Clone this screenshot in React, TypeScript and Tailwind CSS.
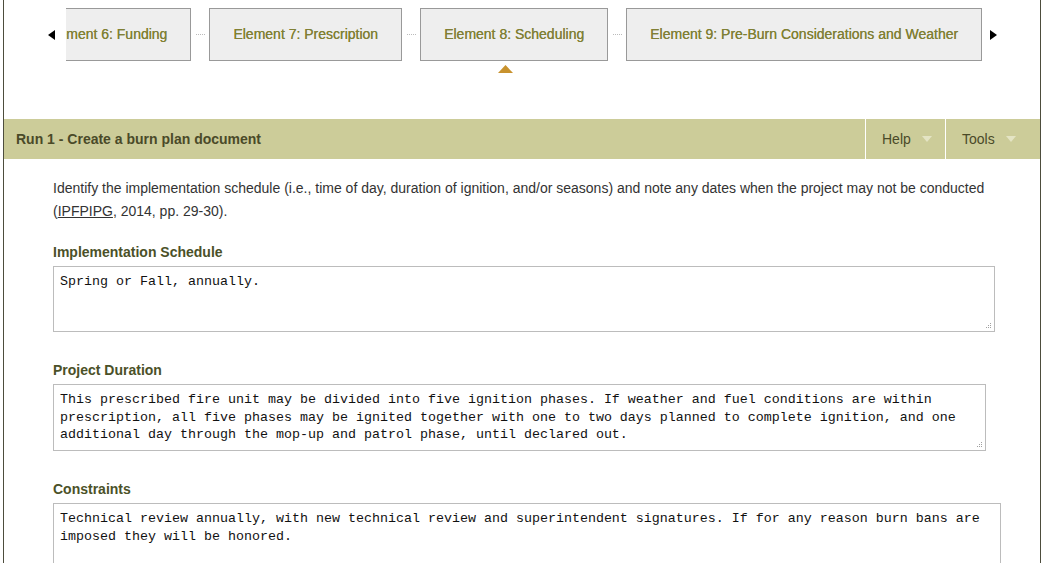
import React from "react";

const tabs = [
  "Element 6: Funding",
  "Element 7: Prescription",
  "Element 8: Scheduling",
  "Element 9: Pre-Burn Considerations and Weather",
];

function Caret({ className }: { className?: string }) {
  return (
    <svg className={className} width="10" height="6" viewBox="0 0 10 6">
      <path d="M0 0 L10 0 L5 6 Z" fill="#e4e4c4" />
    </svg>
  );
}

function Grip() {
  // dotted resize grip like the old browser textarea corner
  return (
    <svg className="pointer-events-none absolute bottom-[3px] right-[3px]" width="7" height="7" viewBox="0 0 7 7">
      <rect x="5" y="1" width="1" height="1" fill="#a0a0a0" />
      <rect x="3" y="3" width="1" height="1" fill="#a0a0a0" />
      <rect x="5" y="3" width="1" height="1" fill="#a0a0a0" />
      <rect x="1" y="5" width="1" height="1" fill="#a0a0a0" />
      <rect x="3" y="5" width="1" height="1" fill="#a0a0a0" />
      <rect x="5" y="5" width="1" height="1" fill="#a0a0a0" />
    </svg>
  );
}

function Field({ label, value, width, height, first }: { label: string; value: string; width: string; height: string; first?: boolean }) {
  return (
    <div className={first ? "mt-[19px]" : "mt-[28px]"}>
      <div className="text-[14px] font-bold leading-[20px] text-[#4b5128]">{label}</div>
      <div className={`relative mt-[4px] ${width}`}>
        <textarea
          className={`block w-full ${height} resize-none border border-[#bcbcbc] bg-white px-[6px] pt-[6px] font-['Liberation_Mono','Courier_New',monospace] text-[13.333px] leading-[17.5px] text-[#111] outline-none`}
          defaultValue={value}
          spellCheck={false}
        />
        <Grip />
      </div>
    </div>
  );
}

export default function App() {
  return (
    <div className="h-[563px] overflow-hidden bg-white font-['Liberation_Sans',Arial,sans-serif]">
      <div className="ml-[3px] h-full w-[1038px] border-x border-[#4d4d3d]">
        {/* Element nav */}
        <div className="flex h-[119px] items-start pt-[8px] pl-[44px]">
          <div className="flex h-[53px] items-center">
            <svg width="7" height="10" viewBox="0 0 7 10">
              <path d="M7 0 L7 10 L0 5 Z" fill="#000" />
            </svg>
          </div>
          <div className="ml-[11px] w-[916px] overflow-hidden">
            <div className="ml-[-44px] flex h-[80px] items-start">
              {tabs.map((t, i) => (
                <React.Fragment key={t}>
                  {i > 0 && (
                    <div className="flex h-[53px] w-[18px] shrink-0 items-center justify-center">
                      <div className="w-[9px] border-t border-dotted border-[#bbbbbb]" />
                    </div>
                  )}
                  <div className="relative shrink-0">
                    <div className="flex h-[53px] items-center whitespace-nowrap border border-[#999999] bg-[#eeeeee] px-[23px] text-[14px] text-[#808035] [text-shadow:0_0_0.4px_#808035]">
                      {t}
                    </div>
                    {i === 2 && (
                      <svg className="absolute left-[78px] top-[57px]" width="15" height="8" viewBox="0 0 15 8">
                        <path d="M7.5 0 L15 8 L0 8 Z" fill="#c8922e" />
                      </svg>
                    )}
                  </div>
                </React.Fragment>
              ))}
            </div>
          </div>
          <div className="ml-[8px] flex h-[53px] items-center">
            <svg width="7" height="10" viewBox="0 0 7 10">
              <path d="M0 0 L0 10 L7 5 Z" fill="#000" />
            </svg>
          </div>
        </div>

        {/* Run header */}
        <div className="flex h-[40px] items-stretch bg-[#cccc99]">
          <div className="flex flex-1 items-center pl-[12px] text-[14px] font-bold text-[#4a4a28]">
            Run 1 - Create a burn plan document
          </div>
          <div className="flex w-[80px] items-center border-l border-white pl-[16px] text-[14px] text-[#4a4a28]">
            Help
            <Caret className="ml-[11px]" />
          </div>
          <div className="flex w-[95px] items-center border-l border-white pl-[16px] text-[14px] text-[#4a4a28]">
            Tools
            <Caret className="ml-[11px]" />
          </div>
        </div>

        {/* Body */}
        <div className="pl-[49px] pt-[18px]">
          <p className="text-[14px] leading-[23px] text-[#333333]">
            Identify the implementation schedule (i.e., time of day, duration of ignition, and/or seasons) and note any dates when the project may not be conducted
            <br />(<span className="underline">IPFPIPG</span>, 2014, pp. 29-30).
          </p>
          <Field
            first
            label="Implementation Schedule"
            value="Spring or Fall, annually."
            width="w-[942px]"
            height="h-[66px]"
          />
          <Field
            label="Project Duration"
            value="This prescribed fire unit may be divided into five ignition phases. If weather and fuel conditions are within prescription, all five phases may be ignited together with one to two days planned to complete ignition, and one additional day through the mop-up and patrol phase, until declared out."
            width="w-[933px]"
            height="h-[67px]"
          />
          <Field
            label="Constraints"
            value="Technical review annually, with new technical review and superintendent signatures. If for any reason burn bans are imposed they will be honored."
            width="w-[948px]"
            height="h-[80px]"
          />
        </div>
      </div>
    </div>
  );
}
